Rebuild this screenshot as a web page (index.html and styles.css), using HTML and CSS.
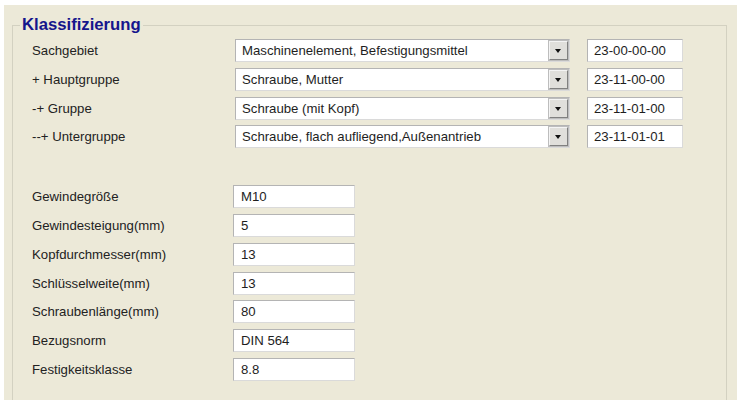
FILE: index.html
```html
<!DOCTYPE html>
<html lang="de">
<head>
    <meta charset="UTF-8">
    <meta name="viewport" content="width=device-width, initial-scale=1.0">
    <title>Klassifizierung</title>
    <link rel="stylesheet" href="styles.css">
</head>
<body>
    <div class="panel">
        <fieldset class="group">
            <legend>Klassifizierung</legend>

            <!-- Klassen-Auswahl -->
            <div class="class-rows">
                <div class="row">
                    <span class="label">Sachgebiet</span>
                    <div class="combo"><span class="combo-text">Maschinenelement, Befestigungsmittel</span><span class="combo-btn"></span></div>
                    <div class="field code">23-00-00-00</div>
                </div>
                <div class="row">
                    <span class="label">+ Hauptgruppe</span>
                    <div class="combo"><span class="combo-text">Schraube, Mutter</span><span class="combo-btn"></span></div>
                    <div class="field code">23-11-00-00</div>
                </div>
                <div class="row">
                    <span class="label">-+ Gruppe</span>
                    <div class="combo"><span class="combo-text">Schraube (mit Kopf)</span><span class="combo-btn"></span></div>
                    <div class="field code">23-11-01-00</div>
                </div>
                <div class="row">
                    <span class="label">--+ Untergruppe</span>
                    <div class="combo"><span class="combo-text">Schraube, flach aufliegend,Außenantrieb</span><span class="combo-btn"></span></div>
                    <div class="field code">23-11-01-01</div>
                </div>
            </div>

            <!-- Merkmale -->
            <div class="prop-rows">
                <div class="row">
                    <span class="label">Gewindegröße</span>
                    <div class="field value">M10</div>
                </div>
                <div class="row">
                    <span class="label">Gewindesteigung(mm)</span>
                    <div class="field value">5</div>
                </div>
                <div class="row">
                    <span class="label">Kopfdurchmesser(mm)</span>
                    <div class="field value">13</div>
                </div>
                <div class="row">
                    <span class="label">Schlüsselweite(mm)</span>
                    <div class="field value">13</div>
                </div>
                <div class="row">
                    <span class="label">Schraubenlänge(mm)</span>
                    <div class="field value">80</div>
                </div>
                <div class="row">
                    <span class="label">Bezugsnorm</span>
                    <div class="field value">DIN 564</div>
                </div>
                <div class="row">
                    <span class="label">Festigkeitsklasse</span>
                    <div class="field value">8.8</div>
                </div>
            </div>
        </fieldset>
    </div>
</body>
</html>
```

FILE: styles.css
```css
/* Grundlayout */
body {
    margin: 0;
    background-color: #fff;
    font-family: "Liberation Sans", Arial, sans-serif;
    font-size: 13.2px;
    color: #1e1e1e;
}

.panel {
    box-sizing: border-box;
    margin: 5px 0 0 4px;
    width: 733px;
    height: 395px;
    padding-top: 10px;
    background-color: #ece9d8;
    overflow: hidden;
}

/* Gruppenrahmen */
.group {
    margin: 0 10px 0 8px;
    padding: 0;
    height: 420px;
    min-width: 0;
    border: 1px solid #d3d1c1;
}

.group legend {
    margin-left: 7px;
    padding: 0 2px;
    font-size: 16.7px;
    line-height: 20px;
    font-weight: bold;
    color: #15158c;
}

/* Zeilen */
.class-rows,
.prop-rows {
    display: flex;
    flex-direction: column;
    gap: 5.75px;
    padding-left: 19px;
}

.class-rows {
    margin-top: 4px;
}

.prop-rows {
    margin-top: 37px;
}

.row {
    display: flex;
    align-items: center;
    height: 23px;
}

.label {
    width: 203px;
    flex: none;
    color: #222;
}

.prop-rows .label {
    width: 201px;
}

/* Eingabefelder */
.field,
.combo {
    box-sizing: border-box;
    height: 23px;
    line-height: 21px;
    padding: 0 6px;
    background-color: #fff;
    border: 1px solid;
    border-color: #b4b4b4 #dadada #dadada #b4b4b4;
    white-space: nowrap;
}

.combo {
    position: relative;
    width: 335px;
}

.code {
    width: 96px;
    margin-left: 17px;
}

.value {
    width: 122px;
    padding-left: 7px;
}

.combo-btn {
    position: absolute;
    top: 1px;
    right: 1px;
    width: 19px;
    height: 19px;
    box-sizing: border-box;
    background-color: #e0dfdb;
    border: 1px solid;
    border-color: #f4f4f4 #808080 #808080 #f4f4f4;
    box-shadow: 0 0 0 1px #bdbdbd;
}

.combo-btn::after {
    content: "";
    position: absolute;
    left: 5px;
    top: 7px;
    border-left: 3.5px solid transparent;
    border-right: 3.5px solid transparent;
    border-top: 4px solid #111;
}
```
